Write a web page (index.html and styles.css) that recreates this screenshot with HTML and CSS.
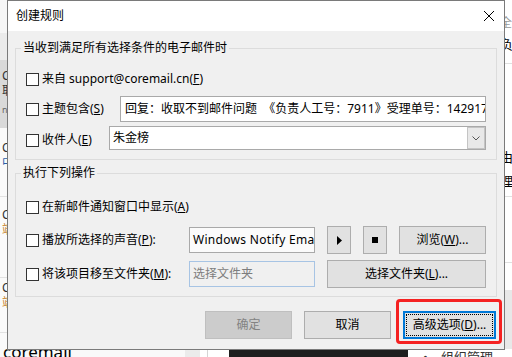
FILE: index.html
```html
<!DOCTYPE html>
<html lang="zh-CN">
<head>
    <meta charset="UTF-8">
    <meta name="viewport" content="width=device-width, initial-scale=1.0">
    <title>创建规则</title>
    <link rel="stylesheet" href="styles.css">
</head>
<body>

    <!-- 背景：邮件客户端 -->
    <div class="app">
        <div class="app-top">
            <ul class="mail-list">
                <li class="list-head"></li>
                <li class="list-filter"></li>
                <li class="selected">
                    <span>Coremail 客服中心</span>
                    <span>取不到邮件问题</span>
                    <span class="snip">nancy@coremail.cn</span>
                </li>
                <li class="item-a">
                    <span>Coremail 论客</span>
                    <span class="blue">中继服务器设置</span>
                </li>
                <li class="item-b">
                    <span>Coremail 论客</span>
                    <span class="orange">端口配置说明</span>
                </li>
                <li class="item-c">
                    <span>Coremail 论客</span>
                    <span class="orange">端口配置说明</span>
                </li>
                <li class="list-rest"></li>
            </ul>
            <div class="reader"></div>
            <div class="side-pane">
                <div class="pane-head">
                    <span class="pane-tab">全栏</span>
                    <span class="pane-title">负责人</span>
                </div>
                <div class="pane-text">
                    <p>由于</p>
                    <p class="gap-top">理</p>
                </div>
                <div class="pane-row"></div>
                <div class="pane-foot"></div>
            </div>
        </div>
        <div class="app-bottom">
            <div class="brand">coremail</div>
            <div class="scroll"></div>
            <div class="split"></div>
            <div class="spacer"></div>
            <div class="dark-panel"></div>
            <div class="menu"><span class="dot">•</span>组织管理</div>
        </div>
    </div>

    <!-- 创建规则对话框 -->
    <div class="dialog">
        <div class="titlebar">
            <span class="title">创建规则</span>
            <svg class="close" width="10" height="10" viewBox="0 0 10 10"><path d="M0 0L10 10M10 0L0 10" stroke="#000" stroke-width="1"/></svg>
        </div>

        <div class="dialog-body">
            <fieldset class="group">
                <legend>当收到满足所有选择条件的电子邮件时</legend>
                <div class="row">
                    <label class="check"><span class="box"></span><span>来自 support@coremail.cn(<u>F</u>)</span></label>
                </div>
                <div class="row row-subject">
                    <label class="check"><span class="box"></span><span>主题包含(<u>S</u>)</span></label>
                    <div class="textbox subject">回复：收取不到邮件问题  《负责人工号：7911》受理单号：14291785</div>
                </div>
                <div class="row row-to">
                    <label class="check"><span class="box"></span><span>收件人(<u>E</u>)</span></label>
                    <div class="combo">
                        <span class="combo-text">朱金榜</span>
                        <span class="combo-btn"><svg width="8" height="5" viewBox="0 0 8 5"><path d="M0.5 0.5L4 4L7.5 0.5" fill="none" stroke="#555" stroke-width="1"/></svg></span>
                    </div>
                </div>
            </fieldset>

            <fieldset class="group actions">
                <legend>执行下列操作</legend>
                <div class="row">
                    <label class="check"><span class="box"></span><span>在新邮件通知窗口中显示(<u>A</u>)</span></label>
                </div>
                <div class="action-row">
                    <label class="check"><span class="box"></span><span>播放所选择的声音(<u>P</u>):</span></label>
                    <div class="textbox sound">Windows Notify Email</div>
                    <div class="btn-set">
                        <button class="btn icon-btn"><svg width="5" height="9" viewBox="0 0 5 9"><path d="M0 0L5 4.5L0 9Z" fill="#000"/></svg></button>
                        <button class="btn icon-btn"><span class="stop"></span></button>
                        <button class="btn browse">浏览(<u>W</u>)...</button>
                    </div>
                </div>
                <div class="action-row row-folder">
                    <label class="check"><span class="box"></span><span>将该项目移至文件夹(<u>M</u>):</span></label>
                    <div class="textbox folder">选择文件夹</div>
                    <button class="btn folder-btn">选择文件夹(<u>L</u>)...</button>
                </div>
            </fieldset>

            <div class="dialog-buttons">
                <button class="btn wide" disabled>确定</button>
                <button class="btn wide">取消</button>
                <span class="annotated">
                    <button class="btn advanced">高级选项(<u>D</u>)...</button>
                    <span class="annot"></span>
                </span>
            </div>
        </div>
    </div>

</body>
</html>
```

FILE: styles.css
```css
* {
    box-sizing: border-box;
}

body {
    margin: 0;
    font-family: "Noto Sans", "Noto Sans CJK SC", sans-serif;
    font-size: 12px;
    line-height: 16px;
    color: #000;
    background: #fff;
    overflow: hidden;
    position: relative;
}

/* Background app */
.app {
    display: flex;
    flex-direction: column;
    width: 512px;
    height: 357px;
}
.app-top {
    display: flex;
    height: 349px;
}
.mail-list {
    width: 230px;
    margin: 0;
    padding: 0;
    list-style: none;
    background: #fafafa;
}
.mail-list li {
    display: flex;
    flex-direction: column;
    padding: 12px 0 0 2px;
    border-bottom: 1px solid #e2e2e2;
    line-height: 15px;
    color: #333;
    white-space: nowrap;
}
.mail-list .list-head { height: 33px; padding: 0; border: 0; background: #f6f6f6; }
.mail-list .list-filter { height: 27px; padding: 0; border: 0; background: #ebebeb; }
.mail-list .selected { height: 68px; padding-top: 8px; border: 0; background: #d9d9d9; }
.mail-list .item-a { height: 69px; }
.mail-list .item-b { height: 81px; padding-top: 10px; }
.mail-list .item-c { height: 55px; padding-top: 2px; }
.mail-list .list-rest { border: 0; }
.snip { font-size: 9px; color: #666; margin-top: 4px; }
.orange { color: #c47b22; }
.blue { color: #2b5fa8; }

.reader {
    flex: 1;
    background: #fff;
}
.side-pane {
    display: flex;
    flex-direction: column;
    width: 12px;
    overflow: hidden;
    white-space: nowrap;
    background: #fff;
}
.pane-head {
    display: flex;
    flex-direction: column;
    height: 64px;
    padding-top: 15px;
    border-bottom: 1px solid #e0e0e0;
}
.pane-tab { color: #999; line-height: 15px; }
.pane-title { font-size: 13px; margin-top: 6px; }
.pane-text {
    height: 133px;
    padding-top: 85px;
    font-size: 13px;
    border-bottom: 1px solid #e0e0e0;
}
.pane-text p { margin: 0; }
.pane-text .gap-top { margin-top: 8px; }
.pane-row { height: 66px; border-bottom: 1px solid #e0e0e0; }
.pane-foot { flex: 1; margin-top: 27px; background: #e8e8e8; }

.app-bottom {
    display: flex;
    flex: 1;
    overflow: hidden;
    background: #fff;
}
.brand {
    width: 185px;
    margin-top: -7px;
    padding-left: 3px;
    font-size: 17px;
    line-height: 20px;
    background: #f9f9f9;
}
.scroll { width: 15px; background: #ebebeb; }
.split { width: 8px; border-right: 1px solid #d5d5d5; }
.spacer { width: 21px; }
.dark-panel { width: 179px; background: #1e1e1e; }
.menu {
    display: flex;
    padding-left: 15px;
    font-size: 13px;
    color: #333;
    white-space: nowrap;
}
.dot { width: 18px; }

/* Dialog */
.dialog {
    position: absolute;
    top: 0;
    left: 7px;
    width: 498px;
    border: 1px solid #7a7a7a;
    background: #f0f0f0;
}
.titlebar {
    display: flex;
    align-items: center;
    justify-content: space-between;
    height: 30px;
    padding: 0 10px 0 8px;
    background: #fff;
}
.dialog-body {
    padding: 9px 7px 10px 7px;
}

.group {
    margin: 0;
    min-width: 0;
    padding: 11px 10px 9px 10px;
    border: 1px solid #dcdcdc;
}
.group legend {
    padding: 0 2px;
    margin-left: -5px;
    line-height: 16px;
}
.actions {
    margin-top: 5px;
    padding-top: 14px;
    padding-bottom: 8px;
}

.row {
    display: flex;
    align-items: center;
    height: 24px;
}
.row-subject { height: 26px; margin-top: 5px; }
.row-to { margin-top: 4px; }
.row-subject .check { width: 94px; }
.row-to .check { width: 83px; padding-top: 4px; }

.check {
    display: flex;
    align-items: center;
    gap: 3px;
    white-space: nowrap;
}
.box {
    width: 13px;
    height: 13px;
    border: 1px solid #333;
    background: #fff;
}

.textbox {
    height: 26px;
    padding: 0 3px;
    border: 1px solid #a9a9a9;
    background: #fff;
    line-height: 24px;
    white-space: pre;
    overflow: hidden;
}
.subject { flex: 1; padding-left: 4px; }
.sound { background: #fbfbfb; letter-spacing: 0.3px; }
.folder {
    border-color: #a7c4e4;
    background: #f0f0f0;
    color: #7d7d7d;
}

.combo {
    display: flex;
    flex: 1;
    height: 24px;
    border: 1px solid #a9a9a9;
    background: #fff;
}
.combo-text {
    flex: 1;
    padding-left: 3px;
    line-height: 22px;
}
.combo-btn {
    display: flex;
    align-items: center;
    justify-content: center;
    width: 18px;
    border: 1px solid #c4c4c4;
    background: #e8e8e8;
}

.action-row {
    display: grid;
    grid-template-columns: 163px 126px 1fr;
    align-items: center;
    height: 28px;
    margin-top: 7px;
}
.row-folder { margin-top: 6px; }
.btn-set {
    display: flex;
    justify-self: end;
    gap: 12px;
}
.folder-btn {
    justify-self: end;
    width: 159px;
}

/* Buttons */
.btn {
    height: 28px;
    padding: 0;
    font-family: inherit;
    font-size: 12px;
    line-height: 16px;
    color: #000;
    background: #e1e1e1;
    border: 1px solid #adadad;
}
.btn:disabled {
    color: #838383;
    background: #cccccc;
    border-color: #bfbfbf;
}
.icon-btn {
    display: flex;
    align-items: center;
    justify-content: center;
    width: 24px;
}
.stop {
    width: 6px;
    height: 6px;
    background: #000;
}
.browse { width: 87px; }

.dialog-buttons {
    display: flex;
    justify-content: flex-end;
    gap: 12px;
    margin-top: 14px;
    padding-right: 1px;
}
.wide { width: 87px; }
.annotated {
    position: relative;
    display: flex;
}
.advanced {
    position: relative;
    width: 93px;
    border: 2px solid #0078d7;
}
.advanced::after {
    content: "";
    position: absolute;
    inset: 1px;
    border: 1px dotted #000;
}
.annot {
    position: absolute;
    top: -12px;
    right: -6px;
    bottom: -5px;
    left: -7px;
    border: 3px solid #f52222;
    border-radius: 4px;
}
```
